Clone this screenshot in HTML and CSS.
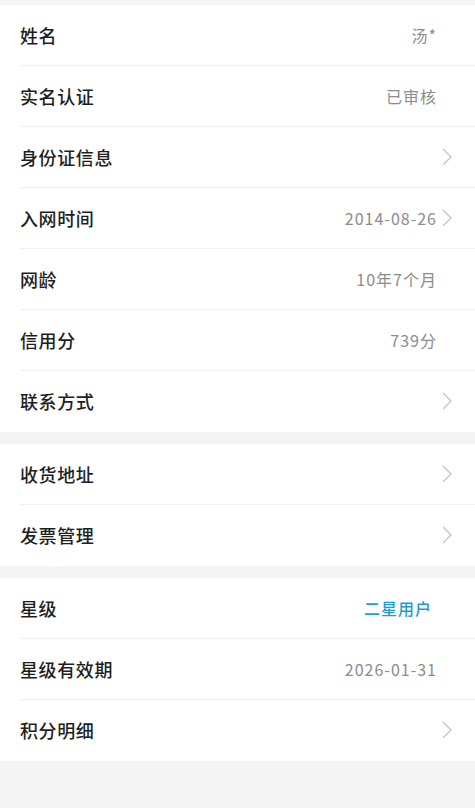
FILE: index.html
```html
<!DOCTYPE html>
<html lang="zh-CN">
<head>
<meta charset="utf-8">
<link rel="stylesheet" href="styles.css">
</head>
<body>
<div class="page">
  <section class="group">
    <div class="row"><span class="label">姓名</span><span class="value">汤*</span><span class="arrow"></span></div>
    <div class="row"><span class="label">实名认证</span><span class="value">已审核</span><span class="arrow"></span></div>
    <div class="row"><span class="label">身份证信息</span><span class="value"></span><span class="arrow"><svg viewBox="0 0 10 18" width="10" height="18"><path d="M1 1 L9 9 L1 17" fill="none" stroke="#c6c6c6" stroke-width="1.4"/></svg></span></div>
    <div class="row"><span class="label">入网时间</span><span class="value">2014-08-26</span><span class="arrow"><svg viewBox="0 0 10 18" width="10" height="18"><path d="M1 1 L9 9 L1 17" fill="none" stroke="#c6c6c6" stroke-width="1.4"/></svg></span></div>
    <div class="row"><span class="label">网龄</span><span class="value">10年7个月</span><span class="arrow"></span></div>
    <div class="row"><span class="label">信用分</span><span class="value">739分</span><span class="arrow"></span></div>
    <div class="row"><span class="label">联系方式</span><span class="value"></span><span class="arrow"><svg viewBox="0 0 10 18" width="10" height="18"><path d="M1 1 L9 9 L1 17" fill="none" stroke="#c6c6c6" stroke-width="1.4"/></svg></span></div>
  </section>
  <section class="group">
    <div class="row"><span class="label">收货地址</span><span class="value"></span><span class="arrow"><svg viewBox="0 0 10 18" width="10" height="18"><path d="M1 1 L9 9 L1 17" fill="none" stroke="#c6c6c6" stroke-width="1.4"/></svg></span></div>
    <div class="row"><span class="label">发票管理</span><span class="value"></span><span class="arrow"><svg viewBox="0 0 10 18" width="10" height="18"><path d="M1 1 L9 9 L1 17" fill="none" stroke="#c6c6c6" stroke-width="1.4"/></svg></span></div>
  </section>
  <section class="group">
    <div class="row"><span class="label">星级</span><span class="value blue">二星用户</span><span class="arrow"></span></div>
    <div class="row"><span class="label">星级有效期</span><span class="value">2026-01-31</span><span class="arrow"></span></div>
    <div class="row"><span class="label">积分明细</span><span class="value"></span><span class="arrow"><svg viewBox="0 0 10 18" width="10" height="18"><path d="M1 1 L9 9 L1 17" fill="none" stroke="#c6c6c6" stroke-width="1.4"/></svg></span></div>
  </section>
</div>
</body>
</html>
```

FILE: styles.css
```css
html, body {
  margin: 0;
  padding: 0;
  background: #f4f4f4;
}
body {
  font-family: "Noto Sans CJK SC", "Noto Sans", sans-serif;
  width: 475px;
  min-height: 808px;
}
.page {
  padding-top: 5px;
  display: flex;
  flex-direction: column;
  gap: 12px;
}
.group {
  background: #fff;
  padding-left: 20px;
}
.row {
  height: 60px;
  display: flex;
  align-items: center;
  border-bottom: 1px solid #f0f0f0;
}
.row:last-child {
  border-bottom: 1px solid #fff;
}
.label {
  flex: 1;
  font-size: 18px;
  font-weight: 500;
  color: #1e1e1e;
  letter-spacing: 0.6px;
}
.value {
  font-size: 16px;
  color: #8c8c8c;
  letter-spacing: 1px;
  margin-right: -1px;
}
.value.blue {
  color: #1f9bd0;
  font-weight: 500;
  margin-right: 4px;
}
.arrow {
  width: 39px;
  height: 18px;
  display: flex;
  align-items: center;
  padding-left: 6px;
  box-sizing: border-box;
}
.arrow svg {
  display: block;
}
```
